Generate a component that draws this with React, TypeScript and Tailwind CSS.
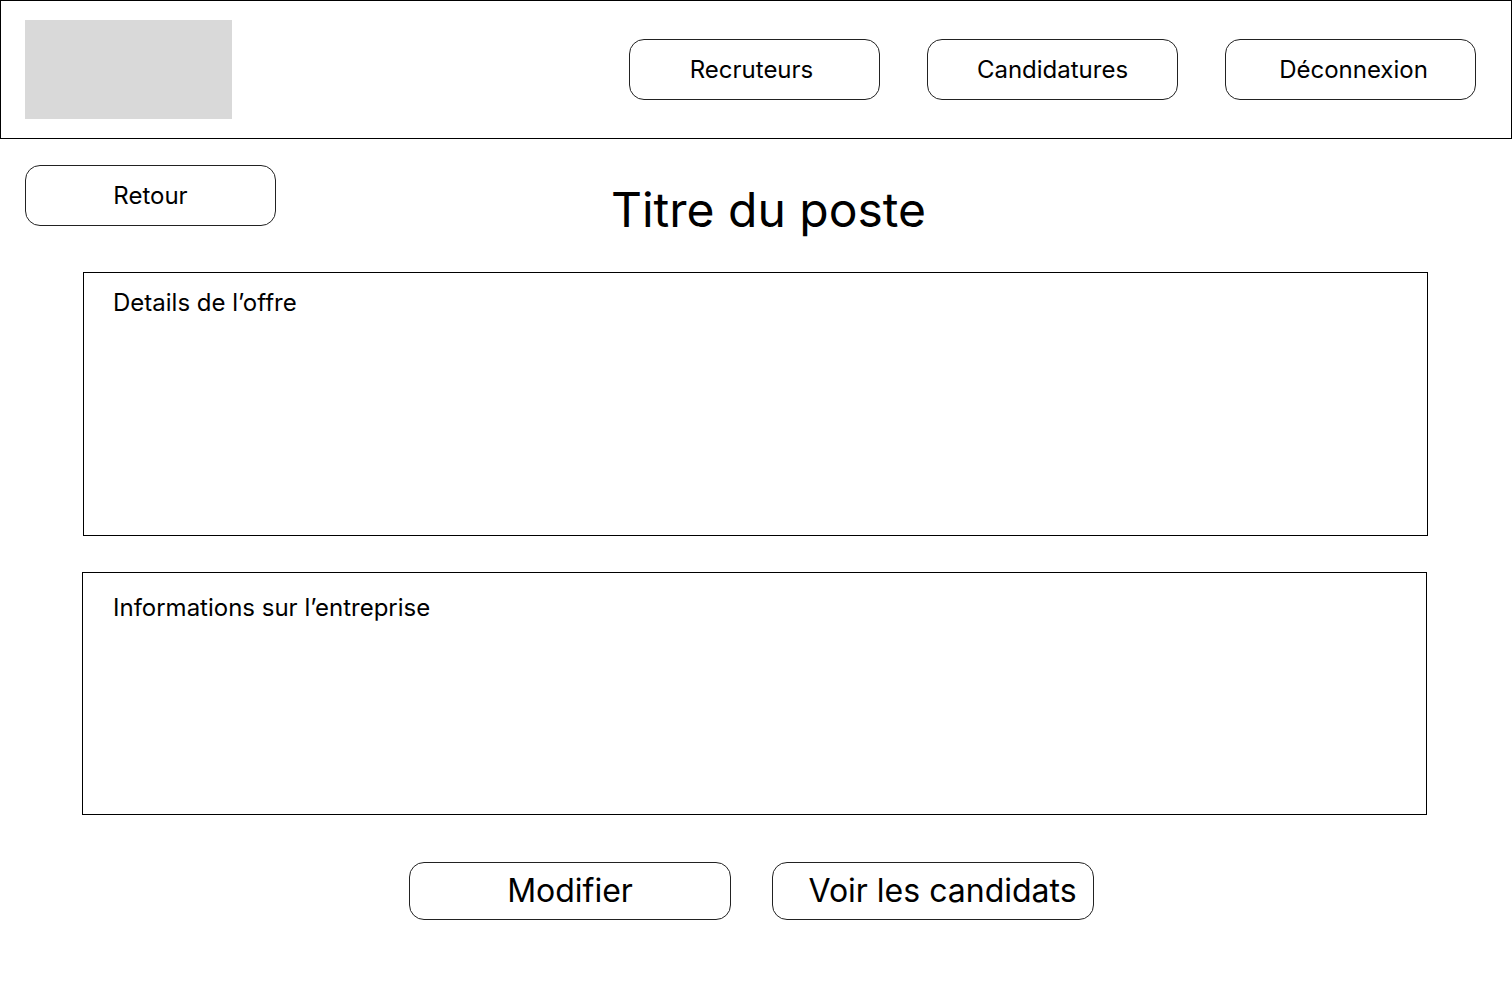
const navItems = [
  { label: "Recruteurs", offset: "pr-[6px]" },
  { label: "Candidatures", offset: "" },
  { label: "Déconnexion", offset: "pl-[6px]" },
];

export default function App() {
  return (
    <div className="min-h-screen bg-white text-black font-['Inter','Liberation_Sans',sans-serif]">
      <header className="flex h-[139px] items-center border border-black pl-[24px] pr-[35px]">
        <div className="h-[99px] w-[207px] bg-[#d9d9d9]" />
        <nav className="ml-auto flex gap-[47px]">
          {navItems.map((item) => (
            <button
              key={item.label}
              className={`h-[61px] w-[251px] rounded-[15px] border border-[#222] text-[24px] ${item.offset}`}
            >
              {item.label}
            </button>
          ))}
        </nav>
      </header>

      <div className="flex items-start pl-[25px] pt-[26px]">
        <button className="h-[61px] w-[251px] rounded-[15px] border border-[#222] text-[24px]">
          Retour
        </button>
        <h1 className="ml-[335px] mt-[16px] text-[48px] leading-[58px]">Titre du poste</h1>
      </div>

      <section className="ml-[83px] mt-[33px] h-[264px] w-[1345px] border border-black px-[29px] pt-[15px]">
        <h2 className="text-[24px] leading-[29px]">Details de l’offre</h2>
      </section>

      <section className="ml-[82px] mt-[36px] h-[243px] w-[1345px] border border-black px-[30px] pt-[20px]">
        <h2 className="text-[24px] leading-[29px]">Informations sur l’entreprise</h2>
      </section>

      <div className="ml-[409px] mt-[47px] flex gap-[41px]">
        <button className="h-[58px] w-[322px] rounded-[15px] border border-[#222] text-[32px]">
          Modifier
        </button>
        <button className="h-[58px] w-[322px] rounded-[15px] border border-[#222] pl-[19px] text-[32px]">
          Voir les candidats
        </button>
      </div>
    </div>
  );
}
